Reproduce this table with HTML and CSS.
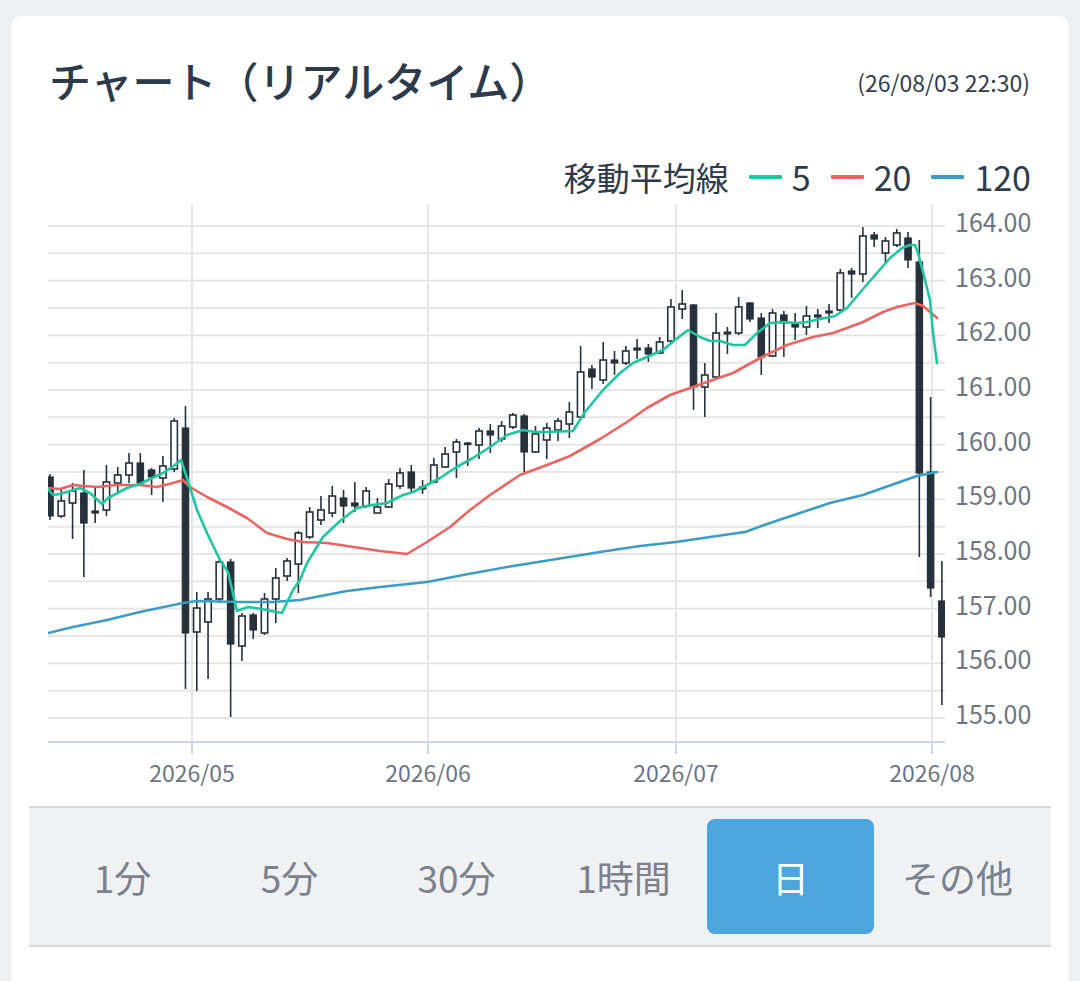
FILE: index.html
```html
<!DOCTYPE html>
<html lang="ja">
<head>
<meta charset="utf-8">
<title>チャート（リアルタイム）</title>
<link rel="stylesheet" href="styles.css">
</head>
<body>
<div class="page">
  <section class="card">
    <header class="card-header">
      <h1 class="title">チャート（リアルタイム）</h1>
      <span class="timestamp">(26/08/03 22:30)</span>
    </header>
    <div class="legend">
      <span class="legend-label">移動平均線</span>
      <span class="legend-item"><i class="swatch swatch-ma5"></i>5</span>
      <span class="legend-item"><i class="swatch swatch-ma20"></i>20</span>
      <span class="legend-item"><i class="swatch swatch-ma120"></i>120</span>
    </div>
    <svg id="chart" class="chart" viewBox="11 197 1058 609" width="1058" height="609" xmlns="http://www.w3.org/2000/svg">
      <defs>
        <clipPath id="plot-clip"><rect x="48" y="198" width="897" height="544"></rect></clipPath>
      </defs>
      <g id="grid"></g>
      <g id="axes"></g>
      <g id="series" clip-path="url(#plot-clip)"></g>
      <g id="labels"></g>
    </svg>
    <nav class="periods">
      <button class="period">1分</button>
      <button class="period">5分</button>
      <button class="period">30分</button>
      <button class="period">1時間</button>
      <button class="period is-active">日</button>
      <button class="period">その他</button>
    </nav>
  </section>
</div>
<script src="script.js"></script>
</body>
</html>
```
FILE: styles.css
```css
* { box-sizing: border-box; }

body {
  margin: 0;
  background: #edf0f3;
  font-family: "Noto Sans CJK JP", "Noto Sans", sans-serif;
}

.page {
  padding: 16px 11px 0;
}

.card {
  background: #ffffff;
  border-radius: 10px 10px 0 0;
  padding: 40px 0 60px;
  min-height: 965px;
}

.card-header {
  display: flex;
  justify-content: space-between;
  align-items: center;
  height: 48px;
  padding: 0 39px 0 38px;
}

.title {
  margin: 0;
  font-size: 42px;
  line-height: 48px;
  font-weight: 500;
  color: #2c3a4b;
}

.timestamp {
  font-size: 23px;
  color: #333e4c;
  padding-top: 4px;
}

.legend {
  display: flex;
  justify-content: flex-end;
  align-items: center;
  margin-top: 53px;
  height: 40px;
  padding-right: 38px;
  font-size: 34px;
  line-height: 40px;
  color: #2f3b4b;
}

.legend-label {
  font-size: 33px;
}

.legend-item {
  display: flex;
  align-items: center;
  margin-left: 20px;
}

.swatch {
  display: block;
  width: 33px;
  height: 4px;
  margin-right: 10px;
  border-radius: 1px;
}

.swatch-ma5 { background: #1fc6a0; }
.swatch-ma20 { background: #ec6461; }
.swatch-ma120 { background: #3b9dc1; }

.chart {
  display: block;
}

.grid-line { stroke: #e6e6e6; stroke-width: 2; }
.axis-line { stroke: #ccd6eb; stroke-width: 2; }

.axis-label {
  font-family: "Noto Sans CJK JP", "Noto Sans", sans-serif;
  font-size: 25px;
  fill: #6e7581;
}

.axis-label-x {
  font-size: 23px;
}

.ma { fill: none; stroke-width: 2.6; stroke-linejoin: round; stroke-linecap: round; }
.ma5 { stroke: #1fc6a0; }
.ma20 { stroke: #ec6461; }
.ma120 { stroke: #3b9dc1; }

.wick { stroke: #26313b; stroke-width: 1.6; }
.body-up { fill: #ffffff; stroke: #26313b; stroke-width: 1.6; }
.body-down { fill: #26313b; stroke: #26313b; stroke-width: 1.2; }

.periods {
  display: flex;
  margin: 0 18px;
  padding: 11px 10px;
  background: #eff1f3;
  border-top: 2px solid #d7d9dc;
  border-bottom: 2px solid #d7d9dc;
}

.period {
  flex: 1 1 0;
  height: 115px;
  border: 0;
  border-radius: 8px;
  background: transparent;
  font-family: "Noto Sans CJK JP", "Noto Sans", sans-serif;
  font-size: 37px;
  color: #7b818d;
  display: flex;
  align-items: center;
  justify-content: center;
  padding: 0;
}

.period.is-active {
  background: #4ca5dc;
  color: #ffffff;
}
```
FILE: script.js
```js
(function () {
  var NS = "http://www.w3.org/2000/svg";
  var PLOT = { left: 48, right: 945, top: 204, axis: 742 };
  var BASE = 155, BASE_Y = 718, PX_PER_UNIT = 54.67;

  function yOf(p) { return BASE_Y - (p - BASE) * PX_PER_UNIT; }

  function el(tag, attrs, parent, text) {
    var n = document.createElementNS(NS, tag);
    for (var k in attrs) n.setAttribute(k, attrs[k]);
    if (text != null) n.textContent = text;
    parent.appendChild(n);
    return n;
  }

  var grid = document.getElementById("grid");
  var axes = document.getElementById("axes");
  var series = document.getElementById("series");
  var labels = document.getElementById("labels");

  // horizontal grid every 0.5
  for (var k = 0; k <= 18; k++) {
    var y = yOf(BASE + k * 0.5);
    el("line", { x1: PLOT.left, x2: PLOT.right, y1: y, y2: y, "class": "grid-line" }, grid);
  }
  // y labels
  for (var p = 155; p <= 164; p++) {
    el("text", { x: 955, y: yOf(p) + 6, "class": "axis-label" }, labels, p.toFixed(2));
  }

  // month ticks
  var months = [[192, "2026/05"], [428, "2026/06"], [676, "2026/07"], [932, "2026/08"]];
  months.forEach(function (m) {
    el("line", { x1: m[0], x2: m[0], y1: PLOT.top, y2: PLOT.axis, "class": "grid-line" }, grid);
    el("line", { x1: m[0], x2: m[0], y1: PLOT.axis, y2: PLOT.axis + 12, "class": "axis-line" }, axes);
    el("text", { x: m[0], y: 782, "text-anchor": "middle", "class": "axis-label axis-label-x" }, labels, m[1]);
  });
  el("line", { x1: PLOT.left, x2: PLOT.right, y1: PLOT.axis, y2: PLOT.axis, "class": "axis-line" }, axes);

  // candles: [high, low, bodyTop, bodyBottom, down] in plot pixels
  var candles = [
    [474,520,477,516,1],[490,518,501,516,0],[483,539,491,503,0],[470,577,493,523,1],
    [488,523,511,513,1],[465,516,482,510,0],[467,492,475,483,0],[453,483,463,475,0],
    [453,483,463,483,1],[468,495,470,477,1],[456,502,466,478,0],[418,472,421,469,0],
    [406,689,428,633,1],[592,691,608,632,0],[592,679,599,622,0],[560,603,562,599,0],
    [559,717,562,644,1],[613,661,616,646,0],[613,639,615,630,1],[593,635,599,633,0],
    [568,623,578,599,0],[558,581,561,576,0],[531,593,533,564,0],[507,539,512,537,0],
    [496,525,510,520,0],[486,517,496,513,0],[490,523,498,506,1],[482,512,503,506,1],
    [487,508,491,506,0],[498,513,507,513,0],[479,508,484,507,0],[468,489,473,486,0],
    [465,492,472,488,1],[480,494,487,489,1],[458,483,465,482,0],[447,468,454,467,0],
    [439,478,442,452,0],[442,466,443,444,1],[428,459,431,445,0],[424,453,431,435,1],
    [421,442,426,439,0],[413,429,415,427,0],[414,472,416,452,1],[426,453,434,452,0],
    [423,459,428,440,0],[418,441,421,430,0],[402,438,412,424,0],[346,417,372,417,0],
    [365,389,369,377,1],[342,384,360,380,0],[351,375,360,363,1],[346,365,351,363,0],
    [339,359,348,350,1],[344,362,348,354,1],[337,354,342,353,0],[299,343,307,341,0],
    [290,319,304,309,0],[304,410,305,387,1],[363,417,375,387,0],[313,378,333,377,0],
    [327,354,332,334,1],[297,335,307,333,0],[302,322,303,319,1],[313,375,318,357,1],
    [309,357,313,356,0],[311,357,315,323,1],[313,340,324,327,1],[306,335,316,327,0],
    [309,328,315,317,1],[304,323,311,313,1],[269,312,273,310,0],[268,298,271,274,1],
    [227,282,236,274,0],[232,247,235,239,1],[237,263,241,253,0],[229,247,233,245,0],
    [232,268,238,260,1],[240,557,262,473,1],[397,597,472,588,1],[561,705,601,637,1]
  ];

  candles.forEach(function (c, i) {
    var x = 50 + 11.29 * i;
    el("line", { x1: x, x2: x, y1: c[0], y2: c[1], "class": "wick" }, series);
    var h = Math.max(c[3] - c[2], 1.5);
    el("rect", {
      x: x - 3.2, y: c[2], width: 6.4, height: h,
      "class": c[4] ? "body-down" : "body-up"
    }, series);
  });

  var ma5 = [[48,489],[53,495],[60,494],[70,491],[80,488],[90,493],[102,504],[108,498],[127,488],[140,484],[150,479],[163,473],[175,465],[181,460],[187,478],[197,510],[207,533],[220,560],[228,572],[237,611],[248,607],[262,609],[282,613],[293,590],[300,580],[307,563],[323,537],[340,521],[357,508],[372,505],[387,503],[403,495],[413,492],[427,485],[440,478],[455,468],[473,458],[490,447],[507,435],[523,430],[535,432],[547,432],[573,431],[585,412],[603,390],[620,373],[633,363],[647,357],[663,350],[675,340],[688,330],[700,337],[710,341],[720,341],[733,345],[745,345],[757,333],[770,323],[783,322],[797,323],[807,322],[820,319],[835,316],[847,308],[863,289],[877,273],[890,258],[902,248],[910,245],[915,245],[918,253],[923,272],[930,300],[933,333],[937,363]];
  var ma20 = [[48,488],[60,489],[73,485],[97,487],[117,485],[140,485],[157,487],[173,483],[183,480],[190,487],[207,497],[227,507],[247,518],[267,533],[287,539],[303,542],[327,543],[347,546],[380,551],[407,554],[427,542],[450,527],[470,510],[490,495],[520,475],[547,465],[570,456],[600,439],[627,422],[647,408],[670,395],[693,387],[707,382],[733,373],[760,358],[787,345],[813,337],[833,333],[847,328],[863,322],[883,312],[897,307],[910,304],[915,303],[923,306],[937,318]];
  var ma120 = [[48,633],[73,627],[107,620],[140,612],[183,603],[197,601],[240,602],[273,602],[300,600],[347,591],[380,587],[427,582],[463,575],[513,566],[563,558],[600,552],[640,546],[676,542],[710,537],[745,532],[770,523],[800,513],[830,503],[863,495],[897,483],[917,476],[937,472]];

  function line(points, cls) {
    el("polyline", { points: points.map(function (p) { return p.join(","); }).join(" "), "class": "ma " + cls }, series);
  }
  line(ma120, "ma120");
  line(ma20, "ma20");
  line(ma5, "ma5");
})();
```
